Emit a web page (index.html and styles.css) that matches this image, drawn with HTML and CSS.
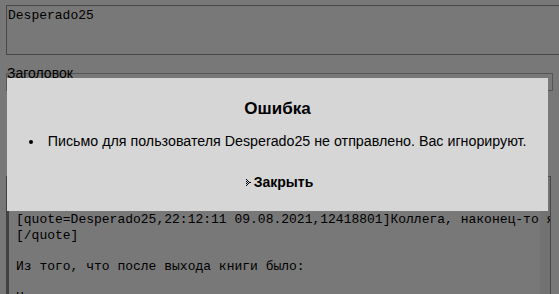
FILE: index.html
```html
<!DOCTYPE html>
<html lang="ru">
<head>
<meta charset="utf-8">
<title>Ошибка</title>
<link rel="stylesheet" href="styles.css">
</head>
<body>
<div class="form">
  <div class="box to">Desperado25</div>
  <div class="label">Заголовок</div>
  <div class="subject"></div>
  <div class="box message">
    <div class="line">Коллега, наконец-то вы тут.</div>
    <div class="line">&nbsp;</div>
    <div class="line">[quote=Desperado25,22:12:11 09.08.2021,12418801]Коллега, наконец-то я</div>
    <div class="line">[/quote]</div>
    <div class="line">&nbsp;</div>
    <div class="line">Из того, что после выхода книги было:</div>
    <div class="line">&nbsp;</div>
    <div class="line">Но главное</div>
  </div>
</div>

<div class="overlay"></div>

<div class="dialog">
  <div class="title">Ошибка</div>
  <ul class="errors">
    <li>Письмо для пользователя Desperado25 не отправлено. Вас игнорируют.</li>
  </ul>
  <a class="close" href="#">
    <svg class="close-icon" width="7" height="7" viewBox="0 0 7 7" aria-hidden="true">
      <rect x="0" y="0" width="1" height="1"/>
      <rect x="1" y="1" width="1" height="1"/>
      <rect x="0" y="2" width="1" height="1"/>
      <rect x="2" y="2" width="1" height="1"/>
      <rect x="1" y="3" width="1" height="1"/>
      <rect x="3" y="3" width="1" height="1"/>
      <rect x="0" y="4" width="1" height="1"/>
      <rect x="2" y="4" width="1" height="1"/>
      <rect x="1" y="5" width="1" height="1"/>
      <rect x="0" y="6" width="1" height="1"/>
      <rect x="4" y="3" width="1" height="1"/>
    </svg>
    <span>Закрыть</span>
  </a>
</div>
</body>
</html>
```
FILE: styles.css
```css
html, body {
  margin: 0;
  padding: 0;
}
body {
  background: #ffffff;
  font-family: "Liberation Sans", Arial, sans-serif;
  color: #000;
  overflow: hidden;
  width: 559px;
  height: 294px;
}
.form {
  padding: 5px 0 0 6px;
  width: 620px;
}
.box {
  background: #fff;
  border: 1px solid #9a9a9a;
  font-family: "Liberation Mono", "Courier New", monospace;
  font-size: 13px;
  line-height: 16px;
  color: #000;
}
.to {
  height: 44px;
  padding: 2px 1px;
}
.label {
  margin-top: 10px;
  font-size: 14px;
  line-height: 16px;
  padding-left: 1px;
}
.subject {
  margin-top: -8px;
  width: 545px;
  height: 16px;
  border: 1px solid #b8b8b8;
}
.message {
  margin-top: 85px;
  width: 534px;
  height: 300px;
  border-left: 3px solid #8a8a8a;
  padding: 4px 0 0 7px;
  line-height: 15.5px;
  box-shadow: inset -10px 0 0 #f2f2f2;
}
.line {
  white-space: pre;
  overflow: hidden;
}
.overlay {
  position: fixed;
  inset: 0;
  background: rgba(0, 0, 0, 0.53);
}
.dialog {
  position: fixed;
  left: 7px;
  top: 78px;
  width: 541px;
  height: 133px;
  background: #d6d6d6;
  display: flex;
  flex-direction: column;
  align-items: center;
  padding-top: 21px;
  box-sizing: border-box;
}
.title {
  font-size: 17px;
  font-weight: bold;
  line-height: 20px;
}
.errors {
  margin: 13px 0 0 0;
  padding: 0;
  list-style: disc inside;
  font-size: 14.25px;
  line-height: 18px;
  text-align: center;
  white-space: nowrap;
}
.close {
  margin-top: 24px;
  margin-left: 4px;
  display: flex;
  align-items: center;
  gap: 1px;
  font-size: 14px;
  font-weight: bold;
  line-height: 16px;
  color: #000;
  text-decoration: none;
}
.close-icon {
  fill: #000;
  display: block;
}
```
